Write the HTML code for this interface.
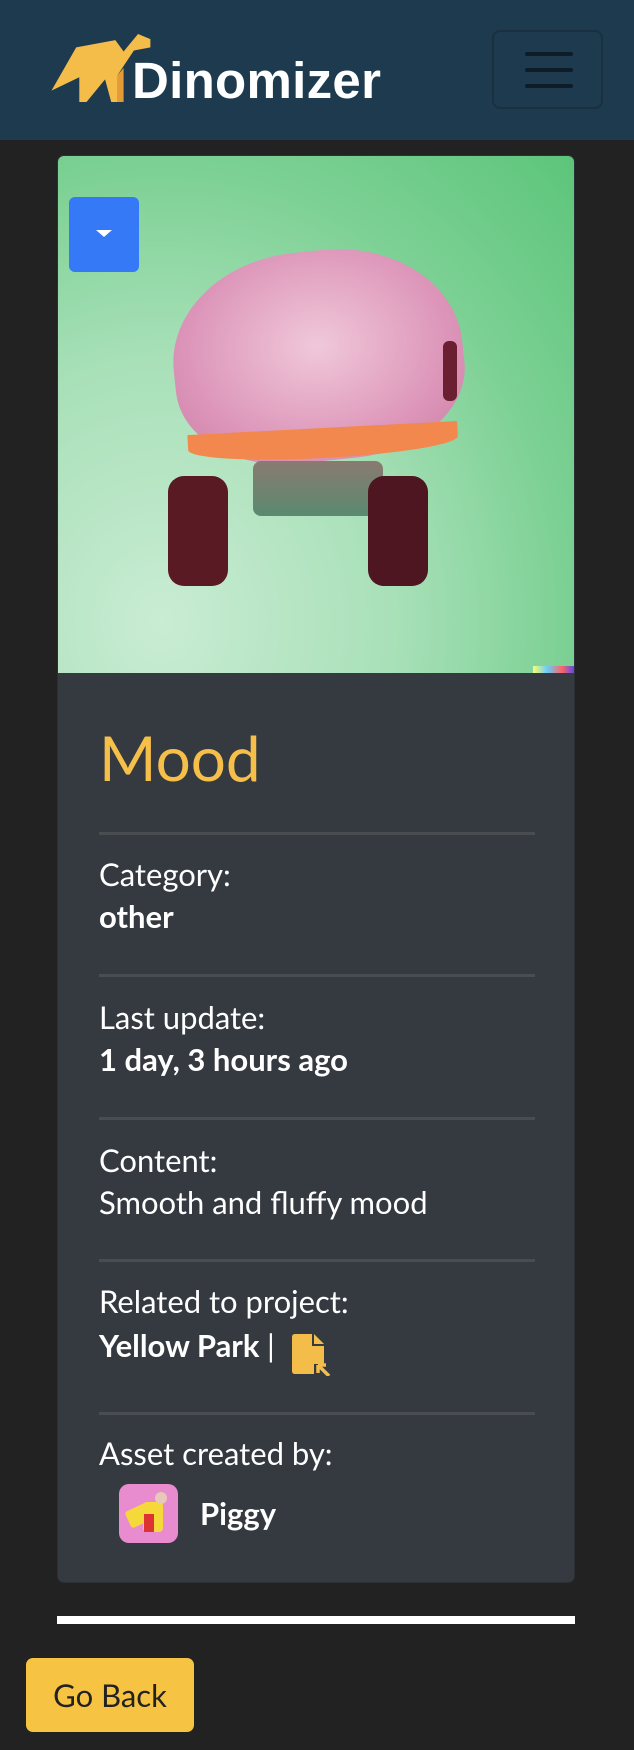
<!DOCTYPE html>
<html><head><meta charset="utf-8"><style>
*{margin:0;padding:0;box-sizing:border-box}
body{width:634px;height:1750px;background:#222;font-family:"Lato","Liberation Sans",sans-serif;color:#fff;position:relative;overflow:hidden}
.hdr{position:absolute;left:0;top:0;width:634px;height:140px;background:#1e3a4f}
.brand{position:absolute;left:132px;top:53px;font-family:"Liberation Sans",sans-serif;font-size:51px;font-weight:bold;color:#fff;letter-spacing:0.3px;line-height:56px}
.ham{position:absolute;left:492px;top:30px;width:111px;height:79px;border:2px solid #1a2f3f;border-radius:8px}
.ham i{position:absolute;left:31px;width:48px;height:4px;background:#0d1c26;border-radius:2px}
.card{position:absolute;left:57px;top:155px;width:518px;height:1428px;background:#343a40;border-radius:7px;overflow:hidden;border:1px solid #2c3034}
.img{position:absolute;left:0;top:0;width:518px;height:517px;background:radial-gradient(ellipse at 20% 90%,#c9ecd3 0%,#a8e0b8 40%,#7bd093 70%,#5cc57a 100%);overflow:hidden}
.dd{position:absolute;left:11px;top:41px;width:70px;height:75px;background:#3579f6;border-radius:6px}
.dd:after{content:"";position:absolute;left:27px;top:33px;border-left:8px solid transparent;border-right:8px solid transparent;border-top:7px solid #fff}
.lbl{position:absolute;left:41px;font-size:31px;color:#fff;white-space:nowrap}
.b{font-weight:bold}
.hr{position:absolute;left:41px;width:436px;height:3px;background:#4a4d50}
</style></head><body>
<div class="hdr">
<svg style="position:absolute;left:48px;top:34px" width="110" height="68" viewBox="0 0 100 66">
<path d="M0 55 L24 13 L62 6 L70 17 L84 0 L96 5 L96 13 L80 16 L64 40 L64 66 L58 66 L52 44 L34 66 L27 66 L27 42 Z" fill="#f4bd4a"/>
<path d="M64 40 L70 33 L70 66 L64 66 Z" fill="#e49a35"/>
</svg>
<div class="brand">Dinomizer</div>
<div class="ham"><i style="top:20px"></i><i style="top:36px"></i><i style="top:52px"></i></div>
</div>
<div class="card">
<div class="img">
<div style="position:absolute;left:115px;top:95px;width:290px;height:210px;border-radius:45% 45% 40% 40% / 50% 50% 40% 40%;background:radial-gradient(ellipse at 50% 45%,#f0c8da,#dc94b8 65%,#c87ea2);transform:rotate(-6deg)"></div>
<div style="position:absolute;left:130px;top:272px;width:270px;height:30px;border-radius:0 0 50% 50%;background:#f2884e;transform:rotate(-3deg)"></div>
<div style="position:absolute;left:195px;top:305px;width:130px;height:55px;background:linear-gradient(#8a7a70,#5a8a70);border-radius:8px"></div>
<div style="position:absolute;left:110px;top:320px;width:60px;height:110px;border-radius:16px;background:#5a1a24"></div>
<div style="position:absolute;left:310px;top:320px;width:60px;height:110px;border-radius:16px;background:#4e1620"></div>
<div style="position:absolute;left:385px;top:185px;width:14px;height:60px;border-radius:6px;background:#6a2030"></div>
<div style="position:absolute;left:475px;top:510px;width:43px;height:7px;background:linear-gradient(90deg,#ff6,#6cf,#f66,#44f)"></div>
<div class="dd"></div>
</div>
<div style="position:absolute;left:41px;top:565px;font-size:62px;color:#f6bf4a">Mood</div>
<div class="hr" style="top:676px"></div>
<div class="lbl" style="top:699px">Category:</div>
<div class="lbl b" style="top:741px">other</div>
<div class="hr" style="top:818px"></div>
<div class="lbl" style="top:842px">Last update:</div>
<div class="lbl b" style="top:884px">1 day, 3 hours ago</div>
<div class="hr" style="top:961px"></div>
<div class="lbl" style="top:985px">Content:</div>
<div class="lbl" style="top:1027px">Smooth and fluffy mood</div>
<div class="hr" style="top:1103px"></div>
<div class="lbl" style="top:1126px">Related to project:</div>
<div class="lbl b" style="top:1170px">Yellow Park <span style="font-weight:normal">|</span></div>
<svg style="position:absolute;left:234px;top:1178px" width="42" height="42" viewBox="0 0 42 42">
<path d="M3 0 H20 V12 H32 V30 H22 V40 H3 Q0 40 0 37 V3 Q0 0 3 0 Z" fill="#f4bd4a"/>
<path d="M22 0 L32 10 H22 Z" fill="#f4bd4a"/>
<path d="M27 32 L37 42 M26 31 V39 M26 31 H34" stroke="#f4bd4a" stroke-width="3.5" fill="none"/>
</svg>
<div class="hr" style="top:1256px"></div>
<div class="lbl" style="top:1278px">Asset created by:</div>
<div style="position:absolute;left:61px;top:1328px;width:59px;height:59px;border-radius:10px;background:#e88ccf;overflow:hidden">
<div style="position:absolute;left:8px;top:22px;width:26px;height:18px;background:#f5d93a;transform:rotate(-25deg);border-radius:3px"></div>
<div style="position:absolute;left:24px;top:18px;width:20px;height:30px;background:#f5d93a;border-radius:4px"></div>
<div style="position:absolute;left:25px;top:30px;width:10px;height:18px;background:#d33"></div>
<div style="position:absolute;left:36px;top:8px;width:12px;height:12px;background:#e8c8b8;border-radius:50%"></div>
</div>
<div class="lbl b" style="left:142px;top:1338px">Piggy</div>
</div>
<div style="position:absolute;left:57px;top:1616px;width:518px;height:8px;background:#fff"></div>
<div style="position:absolute;left:26px;top:1658px;width:168px;height:74px;background:#f6c343;border-radius:7px;color:#222;font-size:31px;text-align:center;line-height:74px">Go Back</div>
</body></html>
